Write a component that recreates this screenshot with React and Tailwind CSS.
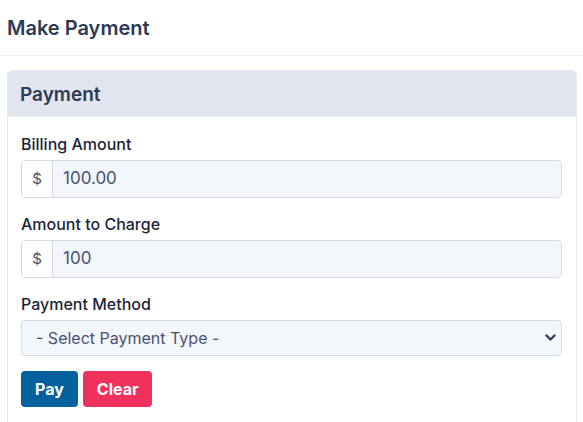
import { useState } from 'react';

function AmountField({ label, value, onChange }) {
    return (
        <div className="flex flex-col">
            <label className="text-[16px] font-medium text-[#1c2536] leading-[20px] mb-[6px]">{label}</label>
            <div className="flex h-[38px] border border-[#d5dbe4] rounded-[4px] overflow-hidden">
                <span className="w-[31px] shrink-0 flex items-center justify-center bg-white border-r border-[#d5dbe4] text-[15px] text-[#4b5567]">$</span>
                <input
                    value={value}
                    onChange={e => onChange(e.target.value)}
                    className="flex-1 min-w-0 bg-[#f3f6fa] px-[10px] text-[17px] text-[#4a5273] outline-none"
                />
            </div>
        </div>
    );
}

export default function App() {
    const [billing, setBilling] = useState('100.00');
    const [charge, setCharge] = useState('100');
    const [method, setMethod] = useState('');

    return (
        <div className="w-[583px] h-[422px] overflow-hidden bg-white font-['Inter','Noto_Sans',sans-serif]">
            {/* Page title */}
            <div className="h-[56px] px-[7px] flex items-center border-b border-[#eef0f5]">
                <h1 className="text-[20px] font-semibold text-[#2c3a55]">Make Payment</h1>
            </div>

            <div className="px-[7px] pt-[14px]">
                <div className="border border-[#e6e9f3] rounded-t-[5px] mr-[-1px]">
                    <div className="h-[46px] bg-[#e2e5ef] px-[12px] pt-[3px] flex items-center rounded-t-[5px] border-b border-[#e8ebf4]">
                        <h2 className="text-[19px] font-semibold text-[#2c3a55]">Payment</h2>
                    </div>

                    <div className="px-[13px] pt-[17px] pb-[20px] flex flex-col gap-[16px] mr-[1px]">
                        <AmountField label="Billing Amount" value={billing} onChange={setBilling} />
                        <AmountField label="Amount to Charge" value={charge} onChange={setCharge} />

                        <div className="flex flex-col">
                            <label className="text-[16px] font-medium text-[#1c2536] leading-[20px] mb-[6px]">Payment Method</label>
                            <div className="relative">
                                <select
                                    value={method}
                                    onChange={e => setMethod(e.target.value)}
                                    className="w-full h-[36px] appearance-none bg-[#f3f6fa] border border-[#d5dbe4] rounded-[4px] pl-[14px] pr-[30px] text-[16px] text-[#4a5273] outline-none"
                                >
                                    <option value="">- Select Payment Type -</option>
                                    <option value="card">Credit Card</option>
                                    <option value="ach">ACH</option>
                                </select>
                                <svg className="absolute right-[6px] top-[13px] w-[11px] h-[9px] pointer-events-none" viewBox="0 0 11 9">
                                    <path d="M1.5 2.5 L5.5 6.5 L9.5 2.5" fill="none" stroke="#3b3a5c" strokeWidth="2.4" strokeLinecap="round" strokeLinejoin="round" />
                                </svg>
                            </div>
                            <div className="flex gap-[5px] mt-[15px]">
                                <button className="h-[36px] px-[14px] rounded-[4px] bg-[#05619e] text-white text-[16px] font-bold">Pay</button>
                                <button className="h-[36px] px-[14px] rounded-[4px] bg-[#f0315e] text-white text-[16px] font-bold">Clear</button>
                            </div>
                        </div>
                    </div>
                </div>
            </div>
        </div>
    );
}
